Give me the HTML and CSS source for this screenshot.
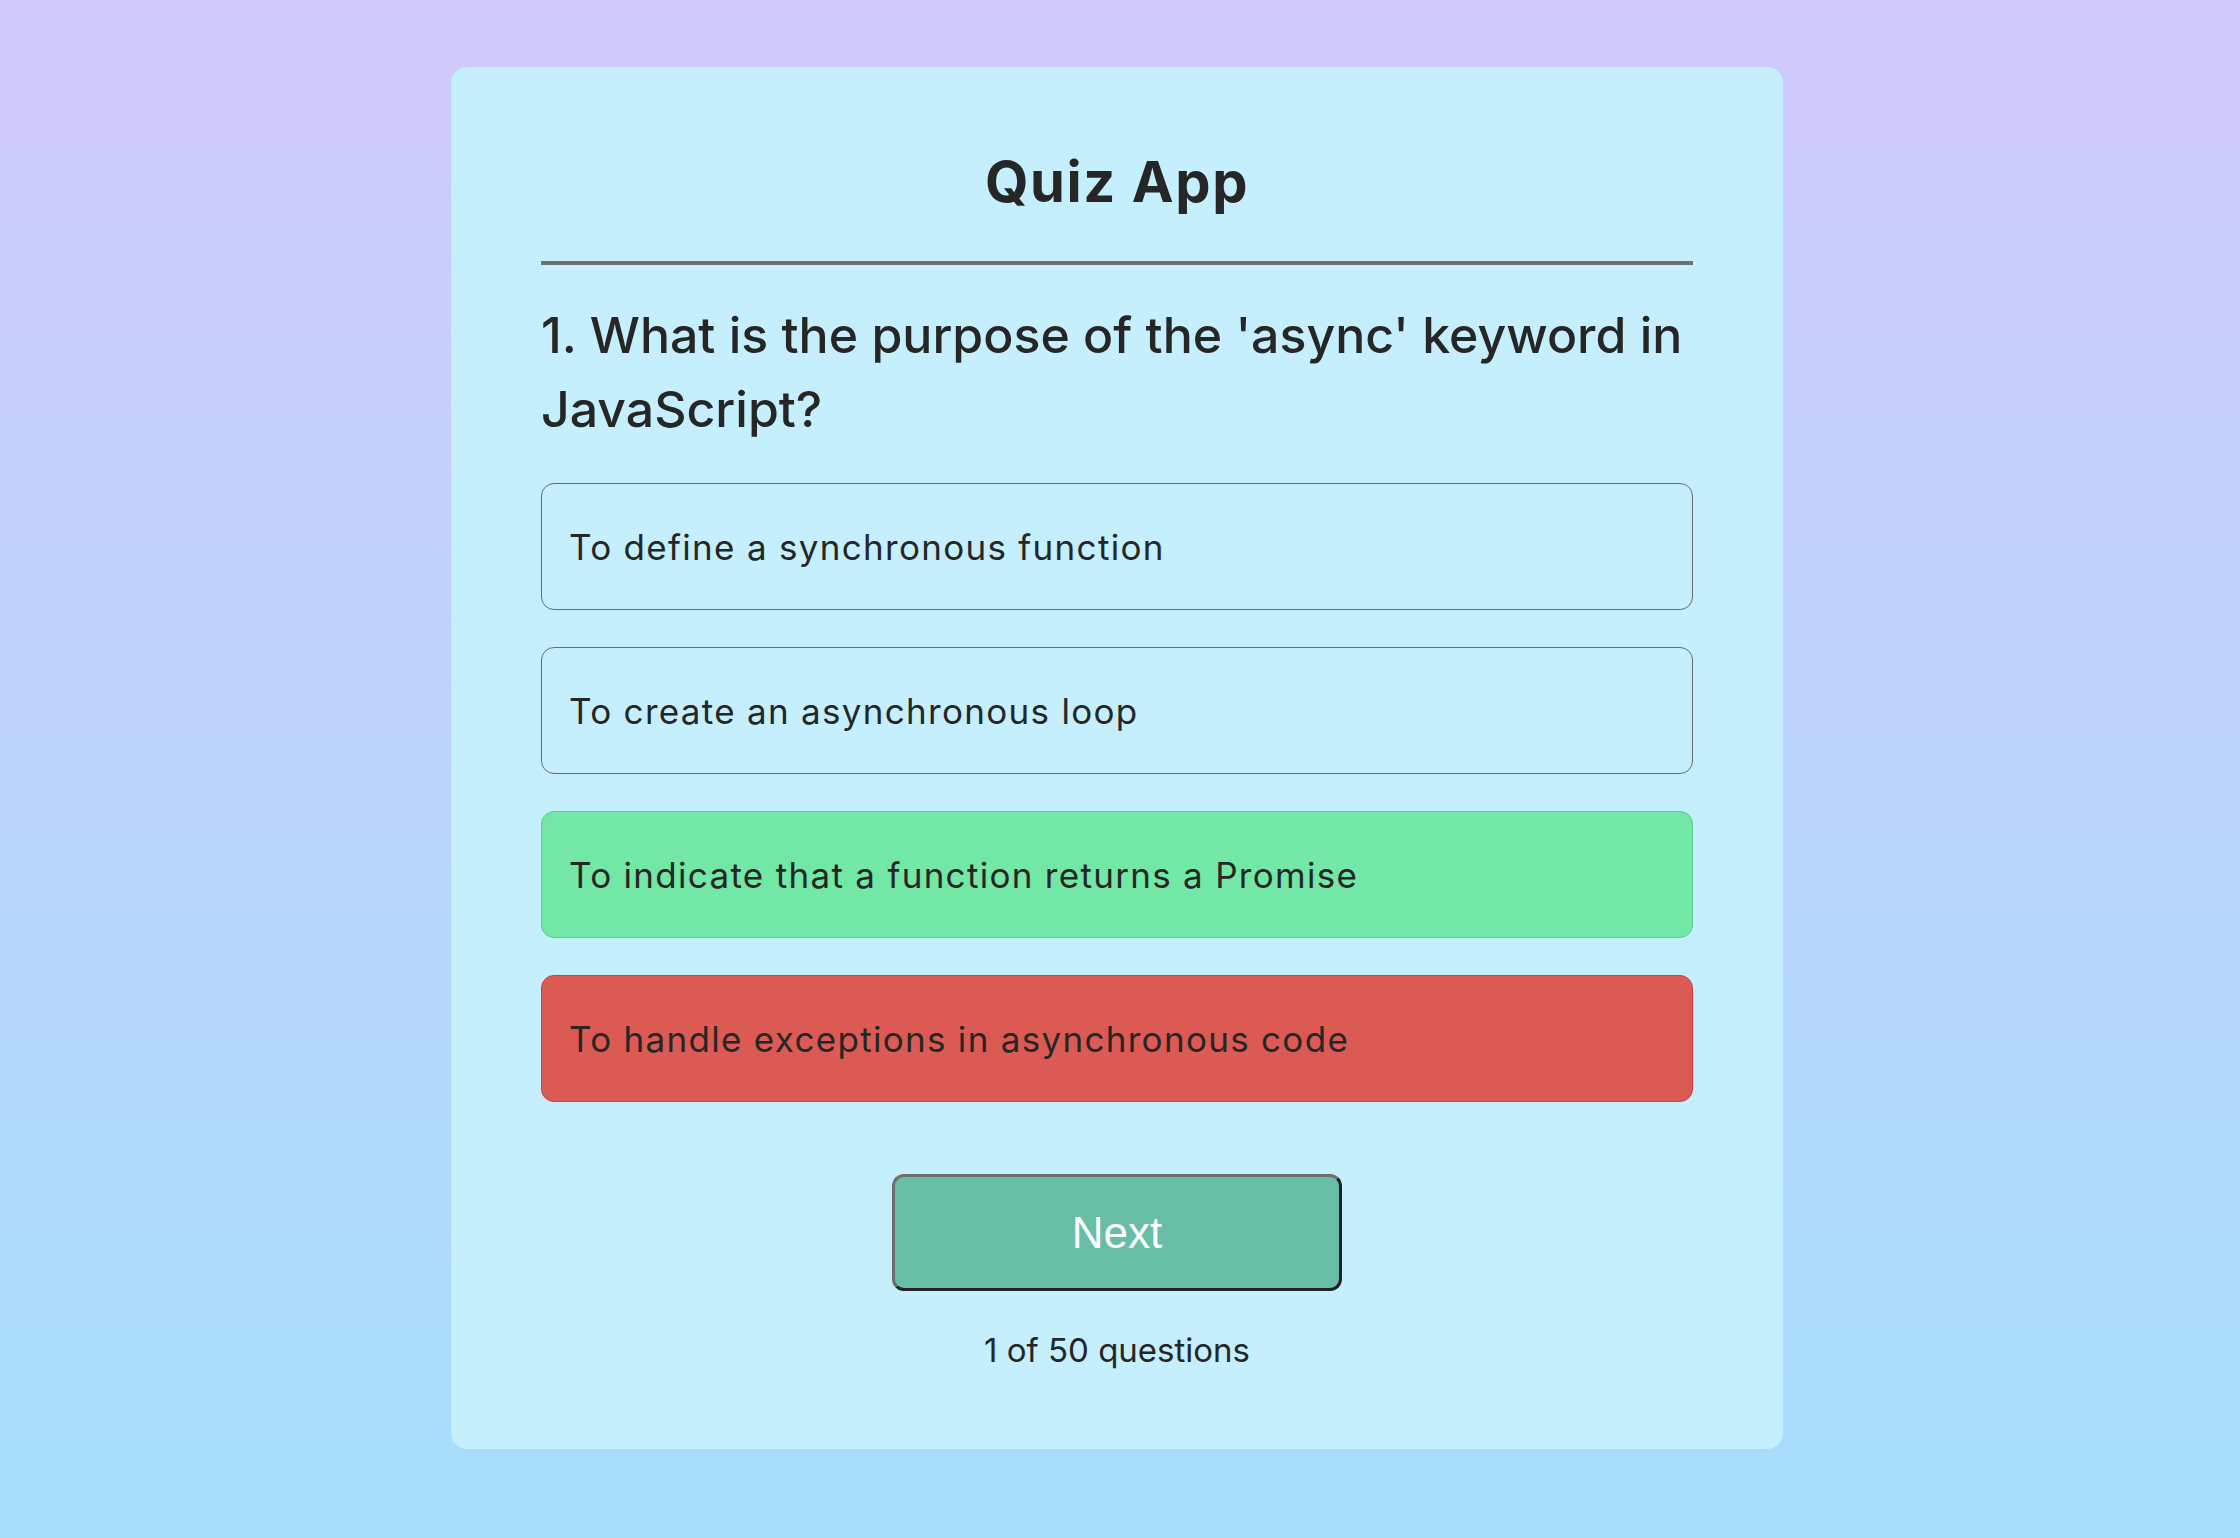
FILE: index.html
```html
<!DOCTYPE html>
<html lang="en">
<head>
<meta charset="utf-8">
<title>Quiz App</title>
<link rel="stylesheet" href="styles.css">
</head>
<body>
  <main class="card">
    <h1 class="title">Quiz App</h1>
    <hr class="divider">
    <h2 class="question">1. What is the purpose of the 'async' keyword in JavaScript?</h2>
    <div class="answers">
      <button class="answer">To define a synchronous function</button>
      <button class="answer">To create an asynchronous loop</button>
      <button class="answer correct">To indicate that a function returns a Promise</button>
      <button class="answer wrong">To handle exceptions in asynchronous code</button>
    </div>
    <button class="next">Next</button>
    <p class="counter">1 of 50 questions</p>
  </main>
</body>
</html>
```

FILE: styles.css
```css
html, body {
  margin: 0;
}

body {
  min-height: 100vh;
  box-sizing: border-box;
  padding: 67px 6px 0 0;
  background: linear-gradient(180deg, #d1c9fc 0%, #a6dffb 100%);
  display: flex;
  justify-content: center;
  align-items: flex-start;
  font-family: "Inter", "Noto Sans", sans-serif;
  color: #262626;
}

.card {
  width: 1332px;
  box-sizing: border-box;
  padding: 87px 90px 82px;
  background: #c5effc;
  border-radius: 16px;
  display: flex;
  flex-direction: column;
}

.title {
  margin: 0;
  font-size: 56px;
  line-height: 56px;
  letter-spacing: 1.6px;
  font-weight: 700;
  text-align: center;
  color: #262626;
}

.divider {
  margin: 51px 0 0;
  height: 4px;
  border: 0;
  background: #6f7070;
}

.question {
  margin: 33px 0 0;
  font-size: 50px;
  line-height: 74px;
  font-weight: 500;
  color: #262626;
}

.answers {
  margin-top: 37px;
  display: flex;
  flex-direction: column;
  gap: 37px;
}

.answer {
  height: 127px;
  box-sizing: border-box;
  padding: 0 27px;
  display: flex;
  align-items: center;
  text-align: left;
  font-family: "Inter", "Noto Sans", sans-serif;
  font-size: 35px;
  letter-spacing: 1.3px;
  font-weight: 400;
  color: #262626;
  background: transparent;
  border: 1px solid #6b6b6b;
  border-radius: 13px;
}

.answer.correct {
  background: #72e7a6;
  border-color: #5ccd95;
}

.answer.wrong {
  background: #dc5a54;
  border-color: #d43c35;
}

.next {
  align-self: center;
  margin-top: 72px;
  width: 450px;
  height: 117px;
  box-sizing: border-box;
  background: #68bea5;
  color: #ffffff;
  font-family: "Liberation Sans", Arial, sans-serif;
  font-size: 44px;
  border: 3px solid;
  border-color: #6f6f6f #222222 #222222 #6f6f6f;
  border-radius: 12px;
}

.counter {
  margin: 43px 0 0;
  font-size: 33px;
  line-height: 33px;
  text-align: center;
  color: #262626;
}
```
